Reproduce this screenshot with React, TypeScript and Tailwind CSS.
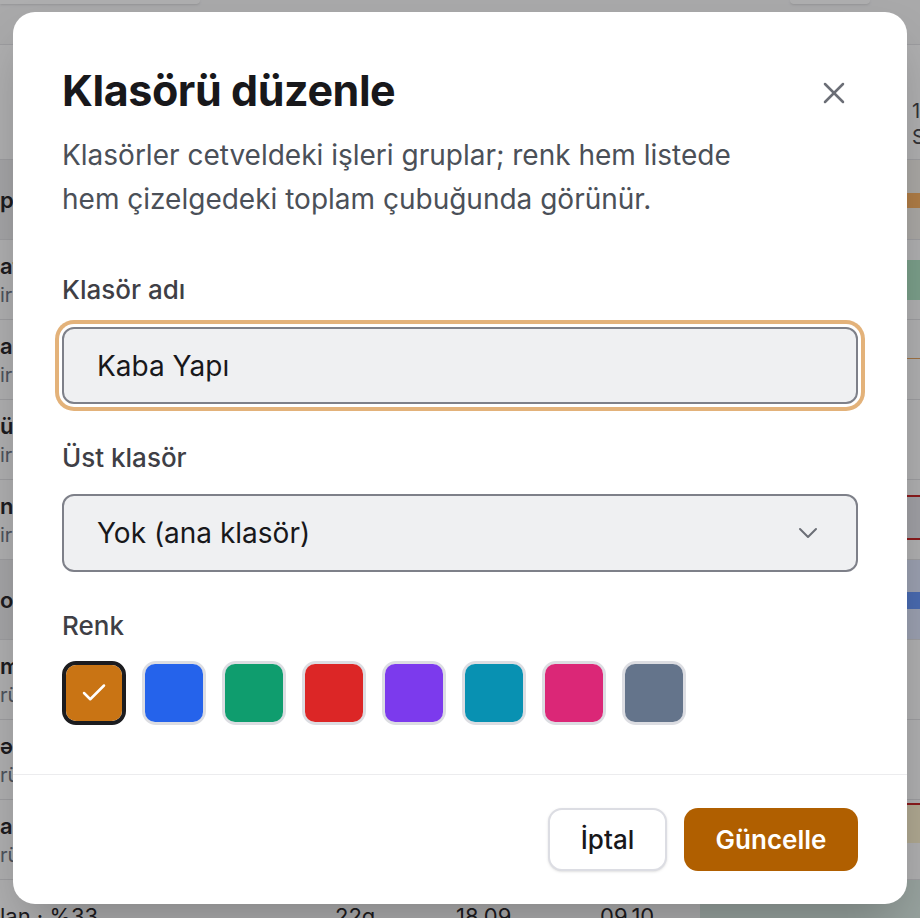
import { Check, ChevronDown, X } from 'lucide-react';

type Bar = {
  readonly top: number;
  readonly height: number;
  readonly className: string;
};

type Row = {
  readonly kind: 'group' | 'task';
  readonly name: string;
  readonly sub?: string;
  readonly tint?: string;
  readonly bars: readonly Bar[];
};

// only the first letters of each row peek out from under the dialog
const ROWS: readonly Row[] = [
  { kind: 'group', name: 'pr', tint: 'bg-[#f8f5ee]', bars: [{ top: 33, height: 15, className: 'bg-[#ffb25e]' }] },
  { kind: 'task', name: 'at', sub: 'iri', bars: [{ top: 20, height: 40, className: 'bg-[#afe6c5]' }] },
  { kind: 'task', name: 'ak', sub: 'iri', bars: [{ top: 38, height: 1, className: 'bg-[#e6a25a]' }] },
  { kind: 'task', name: 'üs', sub: 'iri', bars: [] },
  { kind: 'task', name: 'ne', sub: 'iri', bars: [{ top: 15, height: 45, className: 'bg-[#e8e8ee] border-y-2 border-[#c81e1e]' }] },
  { kind: 'group', name: 'ol', tint: 'bg-[#e1e9ff]', bars: [{ top: 32, height: 17, className: 'bg-[#6597ff]' }] },
  { kind: 'task', name: 'ma', sub: 'rü', bars: [] },
  { kind: 'task', name: 'əl', sub: 'rü', bars: [] },
  { kind: 'task', name: 'ar', sub: 'rü', bars: [{ top: 3, height: 40, className: 'bg-[#fff5d0] border-t-2 border-[#c81e1e]' }] },
];

const SWATCHES = ['#c97414', '#2563eb', '#0f9d6e', '#dc2626', '#7c3aed', '#0891b2', '#db2777', '#64748b'];

function Background() {
  return (
    <div className="flex h-full w-full flex-col bg-white text-[#1f2023]">
      {/* top bar */}
      <div className="flex h-[45px] shrink-0 items-start justify-between border-b border-[#e4e4e7] bg-[#f7f7f8]">
        <div className="h-[4px] w-[200px] rounded-br-lg bg-white shadow" />
        <div className="mr-[50px] h-[4px] w-[80px] rounded-b-lg bg-white shadow" />
      </div>

      {/* table header */}
      <div className="flex h-[115px] shrink-0 border-b border-[#e4e4e7]">
        <div className="w-[700px]" />
        <div className="flex flex-1 items-end justify-end border-l border-[#e4e4e7]">
          <div className="flex h-[70px] w-[14px] flex-col justify-center pl-[6px] text-[20px] leading-[26px] text-[#3f3f46]">
            <span>1</span>
            <span>S</span>
          </div>
        </div>
      </div>

      {ROWS.map((row) => (
        <div key={row.name} className="flex h-[80px] shrink-0 border-b border-[#e4e4e7]">
          <div className={`flex w-[700px] items-center ${row.kind === 'group' ? 'bg-[#f0f0f1]' : 'bg-white'}`}>
            <div className="flex flex-col">
              <span className="text-[22px] font-semibold leading-[30px]">{row.name}</span>
              {row.sub && <span className="text-[20px] leading-[28px] text-[#6b7280]">{row.sub}</span>}
            </div>
          </div>
          <div className={`relative flex-1 border-l border-[#e4e4e7] ${row.tint ?? 'bg-white'}`}>
            {row.bars.map((bar, i) => (
              <div
                key={i}
                className={`absolute left-[120px] right-0 ${bar.className}`}
                style={{ top: bar.top, height: bar.height }}
              />
            ))}
          </div>
        </div>
      ))}

      <div className="flex h-[80px] shrink-0">
        <div className="flex w-[700px] items-start pt-[22px] text-[22px] leading-[28px] text-[#1f2023]">
          <span className="w-[335px]">lan · %33</span>
          <span className="w-[121px]">22g</span>
          <span className="w-[144px]">18.09</span>
          <span>09.10</span>
        </div>
        <div className="flex-1 bg-[#dcede5]" />
      </div>
    </div>
  );
}

function FieldLabel({ children }: { readonly children: string }) {
  return <div className="text-[26px] font-medium leading-[32px] text-[#3f3f46]">{children}</div>;
}

export default function App() {
  const selected = 0;

  return (
    <div className="relative h-[918px] w-[920px] overflow-hidden font-['Inter','Noto_Sans',sans-serif]">
      <Background />
      <div className="absolute inset-0 bg-[#18181b]/35" />

      {/* dialog */}
      <div className="absolute left-[13px] top-[12px] flex h-[892px] w-[894px] flex-col rounded-[22px] bg-white shadow-2xl">
        <button className="absolute right-[55px] top-[63px] text-[#6b6e76]">
          <X size={36} strokeWidth={1.7} />
        </button>

        <div className="flex flex-1 flex-col px-[49px] pt-[54px]">
          <h2 className="text-[43px] font-bold leading-[48px] tracking-[-0.01em] text-[#18181b]">
            Klasörü düzenle
          </h2>
          <p className="mt-[19px] max-w-[700px] text-[28px] leading-[44px] text-[#4b5058]">
            Klasörler cetveldeki işleri gruplar; renk hem listede hem çizelgedeki toplam çubuğunda görünür.
          </p>

          <div className="mt-[53px]">
            <FieldLabel>Klasör adı</FieldLabel>
          </div>
          <div className="mt-[21px] flex h-[77px] items-center rounded-[12px] border-2 border-[#7e8089] bg-[#eff0f2] pl-[33px] text-[28px] text-[#18181b] shadow-[0_0_0_3px_#ffffff,0_0_0_7px_#e3b27a]">
            Kaba Yapı
          </div>

          <div className="mt-[38px]">
            <FieldLabel>Üst klasör</FieldLabel>
          </div>
          <div className="mt-[20px] flex h-[78px] items-center justify-between rounded-[12px] border-2 border-[#7e8089] bg-[#eff0f2] pl-[33px] pr-[32px] text-[28px] text-[#18181b]">
            <span>Yok (ana klasör)</span>
            <ChevronDown size={32} strokeWidth={1.5} className="text-[#6b6e76]" />
          </div>

          <div className="mt-[38px]">
            <FieldLabel>Renk</FieldLabel>
          </div>
          <div className="mt-[19px] flex gap-[16px]">
            {SWATCHES.map((color, i) => (
              <div
                key={color}
                className={`flex h-[64px] w-[64px] items-center justify-center rounded-[14px] ${
                  i === selected ? 'border-4 border-[#1c1c1f]' : 'border-[3px] border-[#dcdde2]'
                }`}
              >
                <div
                  className="flex h-full w-full items-center justify-center rounded-[10px]"
                  style={{ backgroundColor: color }}
                >
                  {i === selected && <Check size={30} strokeWidth={2} className="text-white" />}
                </div>
              </div>
            ))}
          </div>
        </div>

        <div className="flex justify-end gap-[17px] border-t border-[#ececee] px-[49px] pb-[33px] pt-[33px]">
          <button className="h-[63px] w-[119px] rounded-[14px] border-2 border-[#dcdde3] bg-white text-[26px] font-medium text-[#18181b] shadow-sm">
            İptal
          </button>
          <button className="h-[63px] w-[174px] rounded-[14px] bg-[#b05f00] text-[26px] font-semibold text-white">
            Güncelle
          </button>
        </div>
      </div>
    </div>
  );
}
